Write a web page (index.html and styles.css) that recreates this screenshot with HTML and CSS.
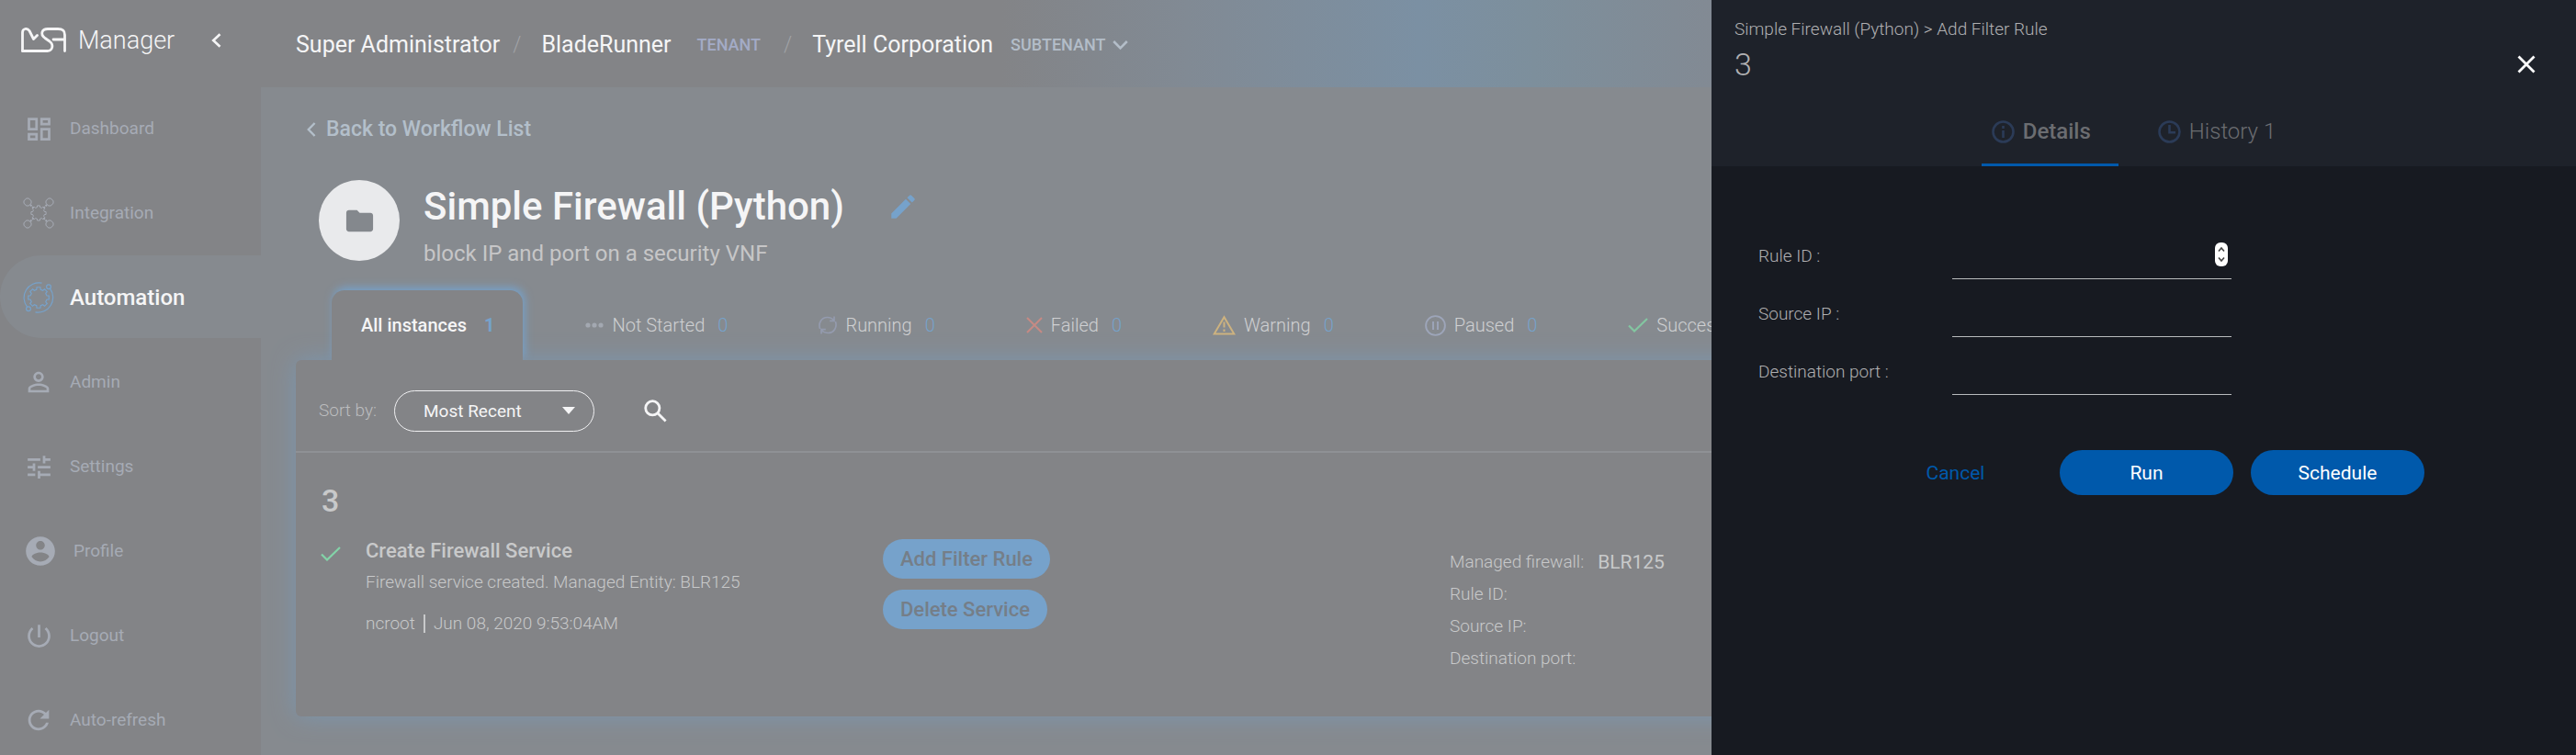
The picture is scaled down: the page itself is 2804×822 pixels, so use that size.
FILE: index.html
```html
<!DOCTYPE html>
<html lang="en">
<head>
<meta charset="utf-8">
<title>MSA Manager</title>
<link rel="stylesheet" href="styles.css">
</head>
<body>
<svg class="defs" aria-hidden="true">
  <symbol id="gear" viewBox="-9 -9 18 18">
    <path fill="none" stroke="currentColor" vector-effect="non-scaling-stroke" d="M-1.6-6.3L-1.4-8.1H1.4L1.6-6.3L3.3-5.6L4.7-6.7L6.7-4.7L5.6-3.3L6.3-1.6L8.1-1.4V1.4L6.3 1.6L5.6 3.3L6.7 4.7L4.7 6.7L3.3 5.6L1.6 6.3L1.4 8.1H-1.4L-1.6 6.3L-3.3 5.6L-4.7 6.7L-6.7 4.7L-5.6 3.3L-6.3 1.6L-8.1 1.4V-1.4L-6.3-1.6L-5.6-3.3L-6.7-4.7L-4.7-6.7L-3.3-5.6Z"/>
  </symbol>
</svg>
<div class="app">
  <aside class="sidebar">
    <div class="brand">
      <svg class="logo" width="49" height="28" viewBox="0 0 49 28" fill="none" stroke="currentColor" stroke-width="2.8" stroke-linejoin="round" stroke-linecap="round"><path d="M1.5 25.5V5.5C1.5.8 6.5.2 9 3.5L13.5 12.5L17.5 8.5"/><path d="M1.5 25.5H28.5C34 25.5 36 19 31 15L26 11.5C20 7 23 1.5 29 1.5H40C46 1.5 47.5 4 47.5 8V25.5"/><path d="M35 13H47"/></svg>
      <span class="brand-name">Manager</span>
      <button class="icon-button collapse" type="button" aria-label="Collapse menu"><svg width="11" height="16" viewBox="0 0 11 16" fill="none" stroke="currentColor" stroke-width="2.6"><path d="M9.5 1.2L2.2 8l7.3 6.8"/></svg></button>
    </div>
    <nav class="nav">
      <a class="nav-link" href="#"><span class="nav-icon"><svg width="33" height="33" viewBox="0 0 24 24"><path fill="currentColor" d="M19 5v2h-4V5h4M9 5v6H5V5h4m10 8v6h-4v-6h4M9 17v2H5v-2h4M21 3h-8v6h8V3zM11 3H3v10h8V3zm10 8h-8v10h8V11zm-10 4H3v6h8v-6z"/></svg></span>Dashboard</a>
      <a class="nav-link" href="#"><span class="nav-icon"><svg width="34" height="34" viewBox="-17 -17 34 34" fill="none" stroke="currentColor"><use href="#gear" x="-9" y="-9" width="18" height="18"/><g id="node"><path d="M-13.5-16h3l1 1.5 1.5 1v3l-1.500 1-1 1.500h-3l-1-1.500-1.500-1v-3l1.500-1z"/><path d="M-9-9L-5-5" stroke-width="2" stroke-dasharray="2 1"/></g><use href="#node" transform="rotate(90)"/><use href="#node" transform="rotate(180)"/><use href="#node" transform="rotate(270)"/></svg></span>Integration</a>
      <a class="nav-link active" href="#"><span class="nav-icon"><svg width="34" height="34" viewBox="-17 -17 34 34" fill="none" stroke="currentColor" stroke-width="1.200"><use href="#gear" x="-12.500" y="-12.500" width="25" height="25"/><path d="M3.500-15.900A16.300 16.300 0 0 0-12.300 10.300"/><path d="M12.500-9.800A16.300 16.300 0 0 1-3.500 15.900"/><circle cx="11" cy="-11.700" r="2.400"/><circle cx="-11" cy="12.200" r="2.400"/></svg></span>Automation</a>
      <a class="nav-link" href="#"><span class="nav-icon"><svg width="34" height="34" viewBox="0 0 24 24"><path fill="currentColor" d="M12 5.900c1.160 0 2.100.94 2.100 2.100s-.94 2.100-2.100 2.100S9.900 9.160 9.900 8s.94-2.100 2.100-2.100m0 9c2.970 0 6.100 1.460 6.100 2.100v1.100H5.900V17c0-.64 3.130-2.100 6.100-2.100M12 4C9.790 4 8 5.790 8 8s1.790 4 4 4 4-1.790 4-4-1.790-4-4-4zm0 9c-2.670 0-8 1.340-8 4v3h16v-3c0-2.660-5.330-4-8-4z"/></svg></span>Admin</a>
      <a class="nav-link" href="#"><span class="nav-icon"><svg width="33" height="33" viewBox="0 0 24 24"><path fill="currentColor" d="M3 17v2h6v-2H3zM3 5v2h10V5H3zm10 16v-2h8v-2h-8v-2h-2v6h2zM7 9v2H3v2h4v2h2V9H7zm14 4v-2H11v2h10zm-6-4h2V7h4V5h-4V3h-2v6z"/></svg></span>Settings</a>
      <a class="nav-link wide" href="#"><span class="nav-icon"><svg width="38" height="38" viewBox="0 0 24 24"><path fill="currentColor" d="M12 2C6.480 2 2 6.480 2 12s4.480 10 10 10 10-4.480 10-10S17.520 2 12 2zm0 3c1.660 0 3 1.340 3 3s-1.340 3-3 3-3-1.340-3-3 1.340-3 3-3zm0 14.200c-2.500 0-4.710-1.280-6-3.220.03-1.990 4-3.080 6-3.080 1.990 0 5.970 1.090 6 3.080-1.290 1.940-3.500 3.220-6 3.220z"/></svg></span>Profile</a>
      <a class="nav-link" href="#"><span class="nav-icon"><svg width="33" height="33" viewBox="0 0 24 24"><path fill="currentColor" d="M13 3h-2v10h2V3zm4.830 2.170l-1.420 1.420C17.990 7.860 19 9.810 19 12c0 3.870-3.130 7-7 7s-7-3.130-7-7c0-2.190 1.010-4.140 2.580-5.420L6.170 5.170C4.230 6.820 3 9.260 3 12c0 4.970 4.030 9 9 9s9-4.030 9-9c0-2.740-1.230-5.180-3.170-6.830z"/></svg></span>Logout</a>
      <a class="nav-link" href="#"><span class="nav-icon"><svg width="34" height="34" viewBox="0 0 24 24"><path fill="currentColor" d="M17.650 6.350C16.200 4.900 14.210 4 12 4c-4.420 0-7.990 3.580-7.990 8s3.570 8 7.990 8c3.730 0 6.840-2.550 7.730-6h-2.080c-.82 2.330-3.040 4-5.650 4-3.310 0-6-2.690-6-6s2.690-6 6-6c1.660 0 3.140.69 4.220 1.780L13 11h7V4l-2.350 2.350z"/></svg></span>Auto-refresh</a>
    </nav>
  </aside>

  <div class="content">
    <header class="topbar">
      <span class="crumb">Super Administrator</span>
      <span class="slash">/</span>
      <span class="crumb">BladeRunner</span>
      <span class="crumb-tag tenant">TENANT</span>
      <span class="slash">/</span>
      <span class="crumb">Tyrell Corporation</span>
      <button class="crumb-tag subtenant" type="button">SUBTENANT <svg width="17" height="12" viewBox="0 0 17 12" fill="none" stroke="currentColor" stroke-width="2.600"><path d="M1.200 2l7.300 7.300L15.800 2"/></svg></button>
    </header>

    <main class="main">
      <a class="back" href="#"><svg width="10" height="16" viewBox="0 0 10 16" fill="none" stroke="currentColor" stroke-width="2.400"><path d="M8.600 1L1.800 8l6.800 7"/></svg>Back to Workflow List</a>

      <section class="hero">
        <div class="avatar"><svg width="35" height="35" viewBox="0 0 24 24"><path fill="currentColor" d="M10 4H4c-1.100 0-1.990.9-1.990 2L2 18c0 1.100.9 2 2 2h16c1.100 0 2-.9 2-2V8c0-1.100-.9-2-2-2h-8l-2-2z"/></svg></div>
        <div>
          <div class="title-row">
            <h1 class="title">Simple Firewall (Python)</h1>
            <button class="icon-button edit" type="button" aria-label="Edit"><svg width="34" height="34" viewBox="0 0 24 24"><path fill="currentColor" d="M3 17.250V21h3.750L17.810 9.940l-3.750-3.750L3 17.250zM20.710 7.040c.39-.39.39-1.020 0-1.410l-2.340-2.340a.9959.9959 0 0 0-1.410 0l-1.830 1.830 3.750 3.750 1.830-1.830z"/></svg></button>
          </div>
          <p class="subtitle">block IP and port on a security VNF</p>
        </div>
      </section>

      <nav class="tabs">
        <a class="tab current" href="#">All instances <b class="count">1</b></a>
        <a class="tab" href="#"><svg width="20" height="8" viewBox="0 0 20 8" fill="#a3a8b1"><circle cx="3" cy="4" r="2.600"/><circle cx="10" cy="4" r="2.600"/><circle cx="17" cy="4" r="2.600"/></svg>Not Started <span class="count">0</span></a>
        <a class="tab" href="#"><svg width="20" height="20" viewBox="0 0 20 20" fill="none" stroke="#949bae" stroke-width="1.700"><path d="M1.600 14C-.5 8 3 1.500 9.500 1.500c3 0 5.500 1 7.500 3.500M17 .5V5.300h-4.800M18.400 6c2.100 6-1.400 12.500-7.900 12.500-3 0-5.500-1-7.500-3.500M3 19.500v-4.800h4.800"/></svg>Running <span class="count">0</span></a>
        <a class="tab" href="#"><svg width="18" height="18" viewBox="0 0 18 18" fill="none" stroke="#c68a84" stroke-width="2"><path d="M1 1l16 16M17 1L1 17"/></svg>Failed <span class="count">0</span></a>
        <a class="tab" href="#"><svg width="25" height="22" viewBox="0 0 25 22" fill="none" stroke="#cdb27f" stroke-width="2"><path d="M12.500 2.200L23.300 20.500H1.700zM12.500 7.500v6M12.500 15.500v2.500"/></svg>Warning <span class="count">0</span></a>
        <a class="tab" href="#"><svg width="23" height="23" viewBox="0 0 23 23" fill="none" stroke="#9da5b9" stroke-width="1.900"><circle cx="11.500" cy="11.500" r="10.400"/><path d="M9 7v9M14 7v9"/></svg>Paused <span class="count">0</span></a>
        <a class="tab" href="#"><svg width="22" height="16" viewBox="0 0 22 16" fill="none" stroke="#83c6a1" stroke-width="2.200"><path d="M1 8.500l6 6L21 1"/></svg>Success <span class="count">0</span></a>
      </nav>

      <section class="panel">
        <div class="toolbar">
          <label class="sort-label" for="sort">Sort by:</label>
          <div class="select-wrap">
            <select class="sort" id="sort"><option>Most Recent</option></select>
            <svg class="caret" width="14" height="8" viewBox="0 0 14 8"><path fill="currentColor" d="M0 0h14L7 8z"/></svg>
          </div>
          <button class="icon-button search" type="button" aria-label="Search"><svg width="25" height="25" viewBox="0 0 25 25" fill="none" stroke="currentColor" stroke-width="2.800"><circle cx="9.300" cy="9.300" r="7.600"/><path d="M14.800 14.800l8.800 8.800"/></svg></button>
        </div>
        <div class="instance">
          <h2 class="instance-name">3</h2>
          <div class="instance-body">
            <svg class="done" width="22" height="16" viewBox="0 0 22 16" fill="none" stroke="#83d3a8" stroke-width="2.200"><path d="M1 8.500l6 6L21 1"/></svg>
            <div class="process">
              <h3 class="process-name">Create Firewall Service</h3>
              <p class="detail">Firewall service created. Managed Entity: BLR125</p>
              <p class="detail byline"><span>ncroot</span><span>Jun 08, 2020 9:53:04AM</span></p>
            </div>
            <div class="actions">
              <button class="action" type="button">Add Filter Rule</button>
              <button class="action" type="button">Delete Service</button>
            </div>
            <dl class="facts">
              <div><dt>Managed firewall:</dt><dd>BLR125</dd></div>
              <div><dt>Rule ID:</dt></div>
              <div><dt>Source IP:</dt></div>
              <div><dt>Destination port:</dt></div>
            </dl>
          </div>
        </div>
      </section>
    </main>
  </div>
</div>

<aside class="drawer">
  <header class="drawer-head">
    <div class="drawer-title-row">
      <div>
        <p class="drawer-path">Simple Firewall (Python) &gt; Add Filter Rule</p>
        <h2 class="drawer-title">3</h2>
      </div>
      <button class="icon-button close" type="button" aria-label="Close"><svg width="20" height="20" viewBox="0 0 20 20" fill="none" stroke="currentColor" stroke-width="2.800"><path d="M1.500 1.500l17 17M18.500 1.500l-17 17"/></svg></button>
    </div>
    <nav class="drawer-tabs">
      <a class="drawer-tab selected" href="#"><svg width="25" height="25" viewBox="0 0 25 25" fill="none" stroke="currentColor" stroke-width="2.600"><circle cx="12.500" cy="12.500" r="11"/><path d="M12.500 6v3M12.500 11v8"/></svg>Details</a>
      <a class="drawer-tab" href="#"><svg width="25" height="25" viewBox="0 0 25 25" fill="none" stroke="currentColor" stroke-width="2.600"><circle cx="12.500" cy="12.500" r="11"/><path d="M12.500 5v8.300H19"/></svg>History 1</a>
    </nav>
  </header>
  <form class="form">
    <div class="field">
      <label for="rule">Rule ID :</label>
      <div class="number-wrap">
        <input class="text-input" id="rule" type="number">
        <svg class="stepper" width="14" height="26" viewBox="0 0 14 26"><rect width="14" height="26" rx="6" fill="#fff"/><path d="M4 9.500l3-3.500 3 3.500M4 16.500L7 20l3-3.500" fill="none" stroke="#444" stroke-width="1.600"/></svg>
      </div>
    </div>
    <div class="field">
      <label for="source">Source IP :</label>
      <input class="text-input" id="source" type="text">
    </div>
    <div class="field">
      <label for="port">Destination port :</label>
      <input class="text-input" id="port" type="text">
    </div>
    <div class="buttons">
      <button class="button link" type="button">Cancel</button>
      <button class="button" type="button">Run</button>
      <button class="button" type="button">Schedule</button>
    </div>
  </form>
</aside>
</body>
</html>
```
FILE: styles.css
```css
* { box-sizing: border-box; }

body {
  margin: 0;
  overflow: hidden;
  background: #868a8f;
  color: #f5f5f6;
  font-family: Roboto, "Liberation Sans", sans-serif;
  font-size: 19px;
  line-height: 24px;
}

h1, h2, h3, p, dl, dd { margin: 0; }
a { color: inherit; text-decoration: none; }
button, select, input { font: inherit; color: inherit; }
button { border: 0; background: none; padding: 0; }
svg { flex: none; display: block; }

.defs { position: absolute; width: 0; height: 0; }

.icon-button { display: flex; }

.app { display: flex; min-height: 100vh; }

/* Sidebar */
.sidebar { flex: none; width: 284px; background: #838487; }

.brand {
  display: flex;
  align-items: center;
  height: 93px;
  padding: 0 43px 5px 23px;
}
.brand-name { margin-left: 13px; font-size: 27px; font-weight: 300; }
.collapse { margin-left: auto; }

.nav { display: flex; flex-direction: column; gap: 2px; padding-top: 1px; }
.nav-link {
  display: flex;
  align-items: center;
  gap: 17px;
  height: 90px;
  padding: 2px 0 0 25px;
  border-radius: 45px 0 0 45px;
  color: #a6abb5;
}
.nav-icon { display: flex; justify-content: center; width: 34px; }
.nav-link.wide .nav-icon { width: 38px; }
.nav-link.active { background: #868a8f; color: #f5f5f6; font-size: 24px; font-weight: 500; }
.nav-link.active .nav-icon { color: #76a2cb; }

/* Top bar */
.content { flex: 1; min-width: 0; }

.topbar {
  display: flex;
  align-items: center;
  height: 95px;
  padding: 2px 0 0 38px;
  background: linear-gradient(90deg, #838487 32%, #818a94 40%, #7b90a3 50%, #7d8f9c 55%, #838992 64%, #838487 75%);
  white-space: nowrap;
}
.crumb { font-size: 25px; }
.slash { margin: 0 22px 0 14px; color: #a0a2a6; font-size: 23px; font-weight: 300; }
.crumb-tag { display: flex; align-items: center; gap: 8px; font-size: 18px; font-weight: 500; }
.tenant { margin: 0 11px 0 28px; color: #a3abc6; }
.subtenant { margin-left: 19px; color: #b3bdc8; }

/* Workflow page */
.main { padding: 32px 38px 42px; }

.back {
  display: flex;
  align-items: center;
  gap: 11px;
  margin-left: 12px;
  height: 27px;
  color: #b3bfca;
  font-size: 23px;
  font-weight: 500;
}

.hero { display: flex; gap: 26px; margin: 42px 0 0 25px; }
.avatar {
  display: grid;
  place-items: center;
  flex: none;
  width: 88px;
  height: 88px;
  border-radius: 50%;
  background: #e9eaec;
  color: #84888d;
}
.title-row { display: flex; align-items: center; gap: 47px; height: 58px; }
.title { font-size: 42px; font-weight: 500; line-height: 48px; }
.edit { color: #76a2cb; }
.subtitle { margin-top: 8px; color: #c6c6c7; font-size: 24px; line-height: 28px; }

.tabs {
  display: flex;
  height: 76px;
  margin-top: 26px;
  padding-left: 39px;
  white-space: nowrap;
}
.tab {
  position: relative;
  display: flex;
  flex: none;
  align-items: center;
  gap: 9px;
  margin-right: 99px;
  color: #cfd0d2;
  font-size: 20px;
  font-weight: 300;
}
.tab .count { margin-left: 5px; color: #76a2cb; }
.tab.current {
  z-index: 1;
  margin-right: 68px;
  padding: 0 31px 0 32px;
  border-radius: 14px 14px 0 0;
  background: #838487;
  box-shadow: 2px -3px 10px #76a2cb;
  clip-path: inset(-30px -30px 0 -30px);
  color: #f5f5f6;
  font-weight: 500;
}
.tab.current .count { margin-left: 10px; }

.panel {
  min-height: 388px;
  border-radius: 6px;
  background: #838487;
  box-shadow: 0 0 26px #7b96af;
}
.toolbar {
  display: flex;
  align-items: center;
  height: 101px;
  padding: 11px 25px 0;
  border-bottom: 2px solid #8f9195;
}
.sort-label { width: 82px; color: #bcbdbf; font-weight: 300; }
.select-wrap { position: relative; width: 218px; }
.sort {
  width: 100%;
  height: 45px;
  padding: 2px 31px 0;
  border: 1px solid #f0f0f2;
  border-radius: 23px;
  background: none;
  appearance: none;
}
.caret { position: absolute; top: 18px; right: 21px; pointer-events: none; }
.search { margin-left: 54px; }

.instance { padding: 32px 25px; color: #c8c9ca; }
.instance-name { margin-left: 3px; font-size: 34px; font-weight: 500; line-height: 40px; }
.instance-body {
  display: grid;
  grid-template-columns: 49px 563px 617px 1fr;
  margin: 22px 0 0 2px;
}
.done { margin-top: 8px; }
.process-name { font-size: 22px; font-weight: 500; line-height: 26px; }
.detail { margin-top: 9px; font-weight: 300; }
.byline { display: flex; margin-top: 23px; line-height: 20px; }
.byline span + span { margin-left: 9px; padding-left: 9px; border-left: 2px solid #c8c9ca; }

.actions { display: flex; flex-direction: column; align-items: flex-start; gap: 12px; }
.action {
  height: 43px;
  padding: 0 19px;
  border-radius: 22px;
  background: #76a2cb;
  color: #757e88;
  font-size: 22px;
  font-weight: 500;
}

.facts { display: grid; align-content: start; gap: 11px; padding-top: 13px; }
.facts div { display: flex; gap: 15px; }
.facts dt { font-weight: 300; }
.facts dd { font-size: 21px; }

/* Slide-over drawer */
.drawer {
  position: fixed;
  z-index: 2;
  inset: 0 0 0 auto;
  width: 33.56%;
  background: #171a21;
  color: #b0b0b2;
}
.drawer-head {
  display: flex;
  flex-direction: column;
  height: 181px;
  padding: 20px 44px 0 25px;
  background: #1e222a;
}
.drawer-title-row { display: flex; justify-content: space-between; }
.drawer-path { font-weight: 300; }
.drawer-title { margin-top: 6px; font-size: 34px; font-weight: 300; line-height: 40px; }
.close { align-self: flex-start; margin-top: 40px; color: #fff; }

.drawer-tabs { display: flex; justify-content: center; gap: 32px; margin-top: auto; padding-left: 16px; }
.drawer-tab {
  display: flex;
  align-items: center;
  gap: 9px;
  height: 77px;
  padding: 4px 30px 0 11px;
  border-bottom: 3px solid transparent;
  color: #6b6d71;
  font-size: 24px;
  font-weight: 300;
}
.drawer-tab svg { color: #2b3b57; }
.drawer-tab.selected { border-color: #0059ab; font-weight: 500; }

.form { padding: 60px 51px; }
.field { display: flex; height: 63px; font-weight: 300; }
.field label { width: 211px; padding-top: 26px; }
.number-wrap { position: relative; }
.text-input {
  display: block;
  width: 304px;
  height: 63px;
  padding: 24px 20px 8px 0;
  border: 0;
  border-bottom: 1px solid #b9bcbd;
  background: none;
  appearance: textfield;
  outline: none;
}
.stepper { position: absolute; right: 4px; bottom: 14px; }

.buttons { display: flex; justify-content: center; gap: 19px; margin-top: 60px; padding-left: 6px; }
.button {
  width: 189px;
  height: 49px;
  border-radius: 25px;
  background: #0059ab;
  color: #fff;
  font-size: 21px;
}
.button.link { background: none; color: #0059ab; }
```
